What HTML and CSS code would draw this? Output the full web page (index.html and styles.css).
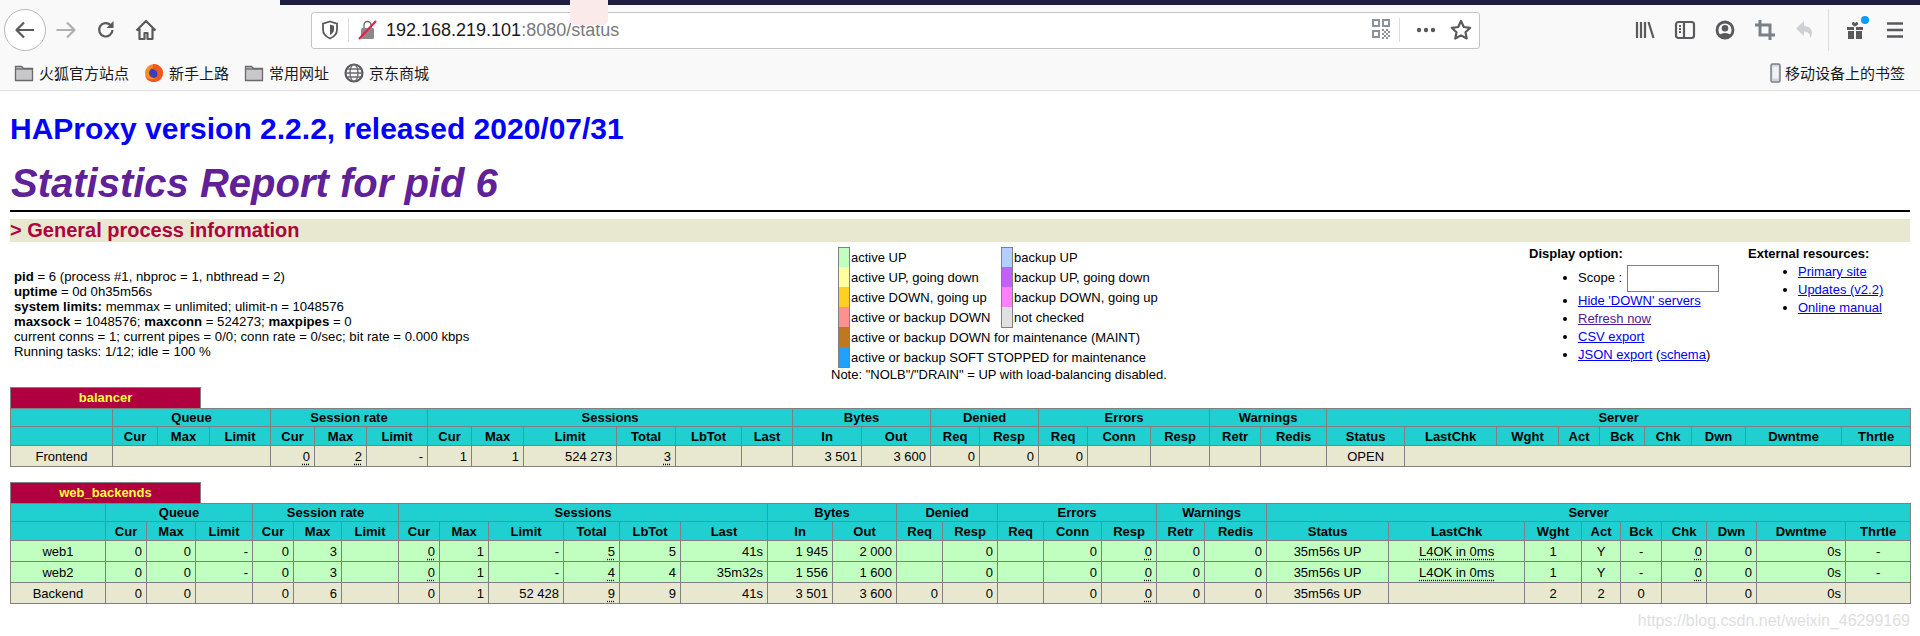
FILE: index.html
```html
<!DOCTYPE html>
<html lang="en">
<head>
<meta charset="utf-8">
<title>Statistics Report for HAProxy</title>
<link rel="stylesheet" href="styles.css">
</head>
<body>
<header class="chrome">
  <div class="tabstrip"><div class="tabgap"></div><div class="tabdark"></div></div>
  <div class="navbar">
    <button class="back"><svg width="24" height="24" viewBox="0 0 24 24"><path d="M21 12H4M11 4.500L3.500 12l7.500 7.500" class="st"/></svg></button>
    <span class="ic fwd"><svg width="24" height="24" viewBox="0 0 24 24"><path d="M2.500 12H20M13 4.500l7.500 7.500-7.500 7.500" class="st"/></svg></span>
    <span class="ic"><svg width="22" height="22" viewBox="0 0 22 22"><path d="M17.500 11a6.700 6.700 0 1 1-2-5" class="st"/><path d="M18.500 2v7h-7z" class="fl"/></svg></span>
    <span class="ic"><svg width="24" height="24" viewBox="0 0 24 24"><path d="M2.500 12.500L12 3l9.500 9.500M5.500 10.500V21h5v-6h3v6h5V10.500" class="st"/></svg></span>
    <div class="urlbar">
      <span class="uicon"><svg width="18" height="20" viewBox="0 0 18 20"><path d="M9 1.500l7 2.200v6c0 4-3 7-7 8.800-4-1.800-7-4.800-7-8.800v-6z" class="st2"/><path d="M9 4.500l4 1.300v4c0 2.500-1.800 4-4 5.200z" class="fl"/></svg></span>
      <span class="usep"></span>
      <span class="uicon lock"><svg width="20" height="22" viewBox="0 0 20 22"><rect x="3" y="9" width="13" height="11" rx="1.500" class="flg"/><path d="M6 9V6a3.500 3.500 0 0 1 7 0v3" class="st3"/><path d="M1 20L18 2" class="stred"/></svg></span>
      <span class="url">192.168.219.101<span class="urlmute">:8080/status</span></span>
      <span class="urlspace"></span>
      <span class="qr"><svg width="18" height="22" viewBox="0 0 18 22"><path d="M0 0h8v8H0zM2 2v4h4V2zM10 0h8v8h-8zM12 2v4h4V2zM0 11h8v8H0zM2 13v4h4v-4zM10 10h2v2h-2zM14 10h2v2h-2zM12 12h2v2h-2zM16 12h2v2h-2zM10 14h2v2h-2zM14 14h2v2h-2zM12 16h2v2h-2zM16 16h2v2h-2zM10 18h2v2h-2zM14 18h2v2h-2z" class="flq" fill-rule="evenodd"/></svg></span>
      <span class="usep usep2"></span>
      <span class="dots"><svg width="20" height="6" viewBox="0 0 20 6"><circle cx="3" cy="3" r="2.200" class="fl"/><circle cx="10" cy="3" r="2.200" class="fl"/><circle cx="17" cy="3" r="2.200" class="fl"/></svg></span>
      <span class="star"><svg width="22" height="22" viewBox="0 0 22 22"><path d="M11 2l2.800 6 6.400.8-4.700 4.400 1.200 6.300L11 16.400l-5.700 3.100 1.200-6.300L1.800 8.800 8.200 8z" class="st"/></svg></span>
    </div>
    <span class="toolspace"></span>
    <div class="tools">
      <span class="ic"><svg width="22" height="22" viewBox="0 0 22 22"><path d="M3 3v16M7 3v16M11 3v16M14.500 3l5 16" class="st"/></svg></span>
      <span class="ic"><svg width="22" height="22" viewBox="0 0 22 22"><rect x="2" y="3" width="18" height="16" rx="2.500" class="st"/><path d="M10 3v16M5 7h2M5 10h2M5 13h2" class="st"/></svg></span>
      <span class="ic"><svg width="22" height="22" viewBox="0 0 22 22"><circle cx="11" cy="11" r="8" class="acc"/><circle cx="11" cy="9.200" r="3.300" class="fl"/><path d="M5 16.500c2-3.500 10-3.500 12 0l-3 2.500H8z" class="fl"/></svg></span>
      <span class="ic"><svg width="22" height="22" viewBox="0 0 22 22"><path d="M6 1v15h15M1 6h15v15" class="stq"/></svg></span>
      <span class="ic"><svg width="22" height="22" viewBox="0 0 22 22"><path d="M10 2L2 9.500l8 7.500v-4.500c4 0 6 2 6.500 7 3-6 1.500-12-6.500-12.500z" class="flf"/></svg></span>
      <span class="tsep"></span>
      <span class="ic gift"><svg width="22" height="22" viewBox="0 0 22 22"><path d="M3 8h7v3H3zM12 8h7v3h-7zM4 12h6v8H4zM12 12h6v8h-6zM8 4c.800-1.500 2.500-1 3 .500.500-1.500 2.200-2 3-.500s-1.500 3-3 3.500c-1.500-.500-3.800-2-3-3.500z" class="fl"/></svg><i class="gdot"></i></span>
      <span class="ic"><svg width="22" height="22" viewBox="0 0 22 22"><path d="M3 4.500h16M3 11h16M3 17.500h16" class="stm"/></svg></span>
    </div>
    <span class="pinkmark"></span>
  </div>
  <nav class="bookmarks">
    <span class="bm"><svg width="20" height="20" viewBox="0 0 20 20"><path d="M1.500 17.500v-14h6l2 2h9v12z" class="folder"/><path d="M1.500 6h17" class="st3"/></svg>火狐官方站点</span>
    <span class="bm"><svg width="20" height="20" viewBox="0 0 20 20"><circle cx="10" cy="10" r="9" fill="#ff8a1e"/><circle cx="10" cy="10" r="5" fill="#3a3fb5"/><path d="M9 1c6 0 10 4 10 9s-4 9-9 9c-4 0-8-2-9-7 2 4 6 5 9 4 3-1 4-4 3-7-1-2-3-3-5-3 1-2 1-3 1-5z" fill="#f2561d"/></svg>新手上路</span>
    <span class="bm"><svg width="20" height="20" viewBox="0 0 20 20"><path d="M1.500 17.500v-14h6l2 2h9v12z" class="folder"/><path d="M1.500 6h17" class="st3"/></svg>常用网址</span>
    <span class="bm"><svg width="20" height="20" viewBox="0 0 20 20"><circle cx="10" cy="10" r="8.500" class="st"/><ellipse cx="10" cy="10" rx="4" ry="8.500" class="st3"/><path d="M1.500 10h17M3 6h14M3 14h14" class="st3"/></svg>京东商城</span>
    <span class="bmspace"></span>
    <span class="bm bmlast"><svg width="11" height="20" viewBox="0 0 11 20"><rect x="1" y="1" width="9" height="18" rx="1.500" class="phone"/><rect x="2.500" y="3.500" width="6" height="12" class="screen"/></svg>移动设备上的书签</span>
  </nav>
</header>

<main class="page">
  <h1 class="ver">HAProxy version 2.2.2, released 2020/07/31</h1>
  <h2 class="rep">Statistics Report for pid 6</h2>
  <hr class="rule">
  <h3 class="sect">&gt; General process information</h3>

  <section class="info">
    <div class="proc">
      <b>pid</b> = 6 (process #1, nbproc = 1, nbthread = 2)<br>
      <b>uptime</b> = 0d 0h35m56s<br>
      <b>system limits:</b> memmax = unlimited; ulimit-n = 1048576<br>
      <b>maxsock</b> = 1048576; <b>maxconn</b> = 524273; <b>maxpipes</b> = 0<br>
      current conns = 1; current pipes = 0/0; conn rate = 0/sec; bit rate = 0.000 kbps<br>
      Running tasks: 1/12; idle = 100 %
    </div>
    <div class="legend">
      <div class="legcols">
        <div class="leg">
          <div class="li"><i class="sw a1"></i>active UP</div>
          <div class="li"><i class="sw a2"></i>active UP, going down</div>
          <div class="li"><i class="sw a3"></i>active DOWN, going up</div>
          <div class="li"><i class="sw a4"></i>active or backup DOWN</div>
          <div class="li"><i class="sw a5"></i>active or backup DOWN for maintenance (MAINT)</div>
          <div class="li"><i class="sw a6"></i>active or backup SOFT STOPPED for maintenance</div>
        </div>
        <div class="leg leg2">
          <div class="li"><i class="sw b1"></i>backup UP</div>
          <div class="li"><i class="sw b2"></i>backup UP, going down</div>
          <div class="li"><i class="sw b3"></i>backup DOWN, going up</div>
          <div class="li"><i class="sw b4"></i>not checked</div>
        </div>
      </div>
      <div class="note">Note: "NOLB"/"DRAIN" = UP with load-balancing disabled.</div>
    </div>
    <div class="opts">
      <b>Display option:</b>
      <ul>
        <li class="scope">Scope : <input class="scopein" type="text"></li>
        <li><a href="#">Hide 'DOWN' servers</a></li>
        <li><a href="#" class="vis">Refresh now</a></li>
        <li><a href="#">CSV export</a></li>
        <li><a href="#">JSON export</a> (<a href="#">schema</a>)</li>
      </ul>
    </div>
    <div class="ext">
      <b>External resources:</b>
      <ul>
        <li><a href="#">Primary site</a></li>
        <li><a href="#">Updates (v2.2)</a></li>
        <li><a href="#">Online manual</a></li>
      </ul>
    </div>
  </section>

  <section class="px px1">
    <div class="pxname">balancer</div>
    <table class="tbl t1">
      <colgroup><col><col><col><col><col><col><col><col><col><col><col><col><col><col><col><col><col><col><col><col><col><col><col><col><col><col><col><col><col><col><col></colgroup>
      <thead>
        <tr class="r1"><th></th><th colspan="3">Queue</th><th colspan="3">Session rate</th><th colspan="6">Sessions</th><th colspan="2">Bytes</th><th colspan="2">Denied</th><th colspan="3">Errors</th><th colspan="2">Warnings</th><th colspan="9">Server</th></tr>
        <tr class="r2"><th></th><th>Cur</th><th>Max</th><th>Limit</th><th>Cur</th><th>Max</th><th>Limit</th><th>Cur</th><th>Max</th><th>Limit</th><th>Total</th><th>LbTot</th><th>Last</th><th>In</th><th>Out</th><th>Req</th><th>Resp</th><th>Req</th><th>Conn</th><th>Resp</th><th>Retr</th><th>Redis</th><th>Status</th><th>LastChk</th><th>Wght</th><th>Act</th><th>Bck</th><th>Chk</th><th>Dwn</th><th>Dwntme</th><th>Thrtle</th></tr>
      </thead>
      <tbody>
        <tr class="fe"><td class="c">Frontend</td><td colspan="3"></td><td><u>0</u></td><td><u>2</u></td><td>-</td><td>1</td><td>1</td><td>524 273</td><td><u>3</u></td><td></td><td></td><td>3 501</td><td>3 600</td><td>0</td><td>0</td><td>0</td><td></td><td></td><td></td><td></td><td class="c">OPEN</td><td colspan="8"></td></tr>
      </tbody>
    </table>
  </section>

  <section class="px px2">
    <div class="pxname">web_backends</div>
    <table class="tbl t2">
      <colgroup><col><col><col><col><col><col><col><col><col><col><col><col><col><col><col><col><col><col><col><col><col><col><col><col><col><col><col><col><col><col><col></colgroup>
      <thead>
        <tr class="r1"><th></th><th colspan="3">Queue</th><th colspan="3">Session rate</th><th colspan="6">Sessions</th><th colspan="2">Bytes</th><th colspan="2">Denied</th><th colspan="3">Errors</th><th colspan="2">Warnings</th><th colspan="9">Server</th></tr>
        <tr class="r2"><th></th><th>Cur</th><th>Max</th><th>Limit</th><th>Cur</th><th>Max</th><th>Limit</th><th>Cur</th><th>Max</th><th>Limit</th><th>Total</th><th>LbTot</th><th>Last</th><th>In</th><th>Out</th><th>Req</th><th>Resp</th><th>Req</th><th>Conn</th><th>Resp</th><th>Retr</th><th>Redis</th><th>Status</th><th>LastChk</th><th>Wght</th><th>Act</th><th>Bck</th><th>Chk</th><th>Dwn</th><th>Dwntme</th><th>Thrtle</th></tr>
      </thead>
      <tbody>
        <tr class="up"><td class="c">web1</td><td>0</td><td>0</td><td>-</td><td>0</td><td>3</td><td></td><td><u>0</u></td><td>1</td><td>-</td><td><u>5</u></td><td>5</td><td>41s</td><td>1 945</td><td>2 000</td><td></td><td>0</td><td></td><td>0</td><td><u>0</u></td><td>0</td><td>0</td><td class="c">35m56s UP</td><td class="c"><u>L4OK in 0ms</u></td><td class="c">1</td><td class="c">Y</td><td class="c">-</td><td><u>0</u></td><td>0</td><td>0s</td><td class="c">-</td></tr>
        <tr class="up"><td class="c">web2</td><td>0</td><td>0</td><td>-</td><td>0</td><td>3</td><td></td><td><u>0</u></td><td>1</td><td>-</td><td><u>4</u></td><td>4</td><td>35m32s</td><td>1 556</td><td>1 600</td><td></td><td>0</td><td></td><td>0</td><td><u>0</u></td><td>0</td><td>0</td><td class="c">35m56s UP</td><td class="c"><u>L4OK in 0ms</u></td><td class="c">1</td><td class="c">Y</td><td class="c">-</td><td><u>0</u></td><td>0</td><td>0s</td><td class="c">-</td></tr>
        <tr class="fe"><td class="c">Backend</td><td>0</td><td>0</td><td></td><td>0</td><td>6</td><td></td><td>0</td><td>1</td><td>52 428</td><td><u>9</u></td><td>9</td><td>41s</td><td>3 501</td><td>3 600</td><td>0</td><td>0</td><td></td><td>0</td><td><u>0</u></td><td>0</td><td>0</td><td class="c">35m56s UP</td><td></td><td class="c">2</td><td class="c">2</td><td class="c">0</td><td></td><td>0</td><td>0s</td><td></td></tr>
      </tbody>
    </table>
  </section>
</main>
<div class="wm">https://blog.csdn.net/weixin_46299169</div>
</body>
</html>
```

FILE: styles.css
```css
html, body { margin: 0; padding: 0; background: #fff; }
body { width: 1920px; height: 636px; overflow: hidden; position: relative; font-family: "Liberation Sans", Arial, sans-serif; font-size: 13px; color: #000; }

/* browser chrome */
.chrome { background: #f9f9fa; height: 90px; border-bottom: 1px solid #e0e0e2; box-sizing: content-box; font-family: "Noto Sans CJK SC", "Liberation Sans", sans-serif; }
.tabstrip { display: flex; height: 5px; }
.tabgap { width: 280px; }
.tabdark { flex: 1; background: #1f1f42; }
.navbar { display: flex; align-items: center; height: 50px; padding-left: 4px; position: relative; }
.back { width: 42px; height: 42px; border-radius: 50%; background: #fff; border: 1px solid #b8b8b8; padding: 0; display: flex; align-items: center; justify-content: center; box-sizing: border-box; }
.ic { width: 40px; height: 40px; display: flex; align-items: center; justify-content: center; position: relative; }
.fwd { opacity: .45; }
.urlbar { width: 1169px; height: 37px; margin-left: 145px; box-sizing: border-box; background: #fff; border: 1px solid #c4c4c6; border-radius: 3px; display: flex; align-items: center; padding-left: 9px; padding-right: 7px; }
.uicon { display: flex; align-items: center; }
.usep { width: 1px; height: 24px; background: #dcdcde; margin: 0 9px; }
.usep2 { margin: 0 16px 0 9px; }
.url { font-family: "Liberation Sans", sans-serif; font-size: 18px; color: #1a1a1a; margin-left: 8px; white-space: nowrap; }
.urlmute { color: #7a7a7a; }
.urlspace { flex: 1; }
.qr { display: flex; margin-right: 0; }
.dots { display: flex; margin-right: 14px; }
.star { display: flex; }
.toolspace { width: 145px; }
.tools { display: flex; align-items: center; }
.tsep { width: 1px; height: 42px; background: #dcdcde; margin: 0 6px 0 3px; }
.gdot { position: absolute; right: 6px; top: 6px; width: 8px; height: 8px; background: #0a9dff; border-radius: 50%; }
.pinkmark { position: absolute; left: 570px; top: -5px; width: 38px; height: 25px; background: #fbeaea; border-radius: 0 0 5px 5px; }
.st { fill: none; stroke: #5a5a5c; stroke-width: 2.200; stroke-linejoin: round; }
.stm { fill: none; stroke: #5a5a5c; stroke-width: 2.600; }
.acc { fill: none; stroke: #5a5a5c; stroke-width: 2.800; }
.st2 { fill: none; stroke: #5a5a5c; stroke-width: 1.800; }
.st3 { fill: none; stroke: #6a6a6c; stroke-width: 1.300; }
.stq { fill: none; stroke: #7a8088; stroke-width: 3; }
.stred { fill: none; stroke: #e0224a; stroke-width: 2.200; }
.fl { fill: #5a5a5c; }
.flg { fill: #8a8a8c; }
.flf { fill: #cdd0d4; }
.flq { fill: #8b929a; }
.folder { fill: #c8c8ca; stroke: #6a6a6c; stroke-width: 1.300; }
.phone { fill: #d0d4d8; stroke: #7a8088; stroke-width: 1.500; }
.screen { fill: #f0f2f4; }

.bookmarks { display: flex; align-items: center; height: 35px; padding-left: 14px; font-size: 15px; color: #1a1a1a; }
.bm { display: flex; align-items: center; gap: 5px; margin-right: 15px; white-space: nowrap; line-height: 20px; }
.bmspace { flex: 1; }
.bmlast { gap: 4px; margin-right: 15px; }

/* page */
.page { padding: 18px 10px 0; }
.ver { margin: 0; font-size: 30px; line-height: 39px; font-weight: bold; color: #0000ff; }
.rep { margin: 13px 0 0 1px; font-size: 40px; line-height: 45px; font-weight: bold; font-style: italic; color: #602098; }
.rule { margin: 4px 0 0; height: 2px; border: 0; background: #000; }
.sect { margin: 7px 0 0; height: 23px; line-height: 23px; font-size: 20px; font-weight: bold; color: #b00040; background: #e8e8d0; }

.info { position: relative; height: 145px; line-height: 15px; }
.proc { position: absolute; left: 4px; top: 27px; white-space: nowrap; font-size: 13.200px; }
.legend { position: absolute; left: 821px; top: 5px; white-space: nowrap; }
.legcols { display: flex; padding-left: 7px; }
.leg { display: flex; flex-direction: column; width: 163px; }
.li { display: flex; align-items: center; height: 20px; }
.sw { width: 10px; height: 20px; border: 1px solid #808080; border-top-width: 1px; box-sizing: content-box; margin-right: 1px; margin-bottom: -1px; flex: none; }
.li + .li .sw { border-top: 0; }
.a1 { background: #c0ffc0; } .a2 { background: #ffffa0; } .a3 { background: #ffd020; } .a4 { background: #ff9090; } .a5 { background: #c07820; } .a6 { background: #20a0ff; }
.b1 { background: #b0d0ff; } .b2 { background: #c060ff; } .b3 { background: #ff80ff; } .b4 { background: #e0e0e0; }
.note { margin-top: 0; }
.opts, .ext { position: absolute; top: 4px; white-space: nowrap; }
.opts { left: 1519px; }
.ext { left: 1738px; }
ul { margin: 0; padding: 0 0 0 40px; }
.opts ul { padding-left: 49px; }
.ext ul { padding-left: 50px; margin-top: 2px; }
.opts li, .ext li { height: 18px; line-height: 18px; }
.opts .scope { height: 28px; line-height: 27px; margin-top: 3px; }
.scopein { width: 90px; height: 25px; border: 1px solid #808080; box-sizing: content-box; padding: 0; vertical-align: middle; margin: 0 0 0 1px; }
a { color: #0000ee; }
a.vis { color: #551a8b; }

.px1 { margin-top: 0; }
.px2 { margin-top: 15px; }
.pxname { width: 189px; height: 20px; line-height: 20px; box-sizing: content-box; border: 1px solid #808080; border-bottom: 0; background: #b00040; color: #ffff40; font-weight: bold; text-align: center; }
.tbl { border-collapse: collapse; table-layout: fixed; width: 1900px; }
.tbl th, .tbl td { border: 1px solid #808080; padding: 0 4px; overflow: hidden; white-space: nowrap; }
.tbl th { background: #20d0d0; font-weight: bold; text-align: center; }
.r1 th { height: 17px; }
.r2 th { height: 18px; }
.tbl td { height: 20px; text-align: right; padding: 0 4px; }
.tbl td.c { text-align: center; }
.fe td { background: #e8e8d0; }
.up td { background: #c0ffc0; }
u { text-decoration: underline dotted; text-underline-offset: 3px; }

.t1 col:nth-child(1) { width: 102px; }
.t1 col:nth-child(2) { width: 45px; }
.t1 col:nth-child(3) { width: 52px; }
.t1 col:nth-child(4) { width: 61px; }
.t1 col:nth-child(5) { width: 44px; }
.t1 col:nth-child(6) { width: 52px; }
.t1 col:nth-child(7) { width: 61px; }
.t1 col:nth-child(8) { width: 44px; }
.t1 col:nth-child(9) { width: 52px; }
.t1 col:nth-child(10) { width: 93px; }
.t1 col:nth-child(11) { width: 59px; }
.t1 col:nth-child(12) { width: 66px; }
.t1 col:nth-child(13) { width: 51px; }
.t1 col:nth-child(14) { width: 69px; }
.t1 col:nth-child(15) { width: 69px; }
.t1 col:nth-child(16) { width: 49px; }
.t1 col:nth-child(17) { width: 59px; }
.t1 col:nth-child(18) { width: 49px; }
.t1 col:nth-child(19) { width: 63px; }
.t1 col:nth-child(20) { width: 59px; }
.t1 col:nth-child(21) { width: 51px; }
.t1 col:nth-child(22) { width: 66px; }
.t1 col:nth-child(23) { width: 78px; }
.t1 col:nth-child(24) { width: 92px; }
.t1 col:nth-child(25) { width: 62px; }
.t1 col:nth-child(26) { width: 41px; }
.t1 col:nth-child(27) { width: 45px; }
.t1 col:nth-child(28) { width: 47px; }
.t1 col:nth-child(29) { width: 54px; }
.t1 col:nth-child(30) { width: 96px; }
.t1 col:nth-child(31) { width: 69px; }

.t2 col:nth-child(1) { width: 95px; }
.t2 col:nth-child(2) { width: 41px; }
.t2 col:nth-child(3) { width: 49px; }
.t2 col:nth-child(4) { width: 57px; }
.t2 col:nth-child(5) { width: 41px; }
.t2 col:nth-child(6) { width: 48px; }
.t2 col:nth-child(7) { width: 57px; }
.t2 col:nth-child(8) { width: 41px; }
.t2 col:nth-child(9) { width: 49px; }
.t2 col:nth-child(10) { width: 75px; }
.t2 col:nth-child(11) { width: 56px; }
.t2 col:nth-child(12) { width: 61px; }
.t2 col:nth-child(13) { width: 87px; }
.t2 col:nth-child(14) { width: 65px; }
.t2 col:nth-child(15) { width: 64px; }
.t2 col:nth-child(16) { width: 46px; }
.t2 col:nth-child(17) { width: 55px; }
.t2 col:nth-child(18) { width: 46px; }
.t2 col:nth-child(19) { width: 58px; }
.t2 col:nth-child(20) { width: 55px; }
.t2 col:nth-child(21) { width: 48px; }
.t2 col:nth-child(22) { width: 62px; }
.t2 col:nth-child(23) { width: 122px; }
.t2 col:nth-child(24) { width: 136px; }
.t2 col:nth-child(25) { width: 57px; }
.t2 col:nth-child(26) { width: 39px; }
.t2 col:nth-child(27) { width: 41px; }
.t2 col:nth-child(28) { width: 45px; }
.t2 col:nth-child(29) { width: 50px; }
.t2 col:nth-child(30) { width: 89px; }
.t2 col:nth-child(31) { width: 65px; }

.wm { position: absolute; right: 10px; bottom: 6px; font-size: 16px; color: #dedede; }
```
